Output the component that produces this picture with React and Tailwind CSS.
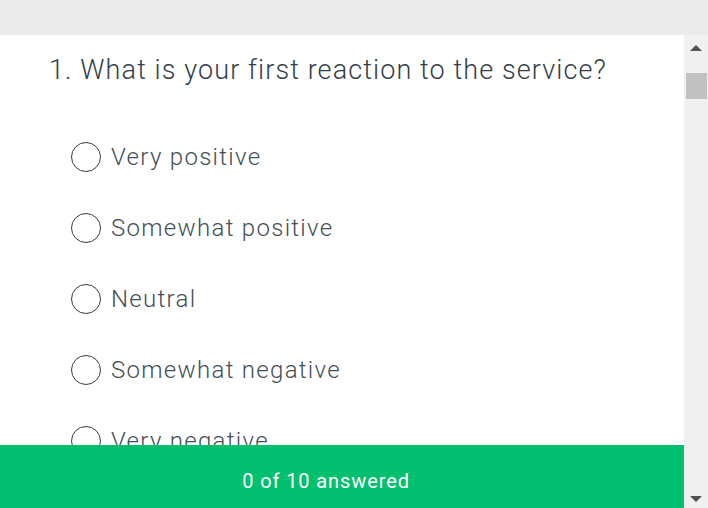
import React from 'react';

const options = ['Very positive', 'Somewhat positive', 'Neutral', 'Somewhat negative', 'Very negative'];

const App = () => {
    return (
        <div className="w-[708px] h-[508px] flex flex-col bg-[#ebebeb] overflow-hidden" style={{ fontFamily: 'Roboto, "Noto Sans", sans-serif' }}>
            {/* top gray band */}
            <div className="h-[35px] shrink-0" />

            <div className="flex flex-1 min-h-0">
                {/* survey panel */}
                <div className="flex flex-col flex-1 bg-white min-w-0">
                    <div className="flex-1 min-h-0 overflow-hidden pl-[49px] pt-[17px]">
                        <h1 className="text-[27px] leading-[36px] font-light text-[#333e48] tracking-[1.1px] whitespace-nowrap">
                            1. What is your first reaction to the service?
                        </h1>
                        <div className="flex flex-col mt-[33px] pl-[22px]">
                            {options.map((opt) => (
                                <div key={opt} className="flex items-center h-[71px] gap-[10px]">
                                    <span className="w-[30px] h-[30px] rounded-full border border-[#333e48] shrink-0" />
                                    <span className="text-[24px] font-light text-[#434e57] tracking-[1.3px]">{opt}</span>
                                </div>
                            ))}
                        </div>
                    </div>
                    <div className="h-[63px] shrink-0 bg-[#00bf6f] flex items-center justify-center pt-[8px] pr-[32px]">
                        <span className="text-white text-[20px] font-normal tracking-[0.9px]">0 of 10 answered</span>
                    </div>
                </div>

                {/* scrollbar */}
                <div className="w-[24px] shrink-0 bg-[#f0f0f0] flex flex-col items-center">
                    <div className="h-[26px] flex items-center justify-center">
                        <span className="w-0 h-0 border-l-[6px] border-r-[6px] border-b-[6px] border-l-transparent border-r-transparent border-b-[#505050]" />
                    </div>
                    <div className="mt-[12px] w-[21px] h-[26px] bg-[#c1c1c1]" />
                    <div className="flex-1" />
                    <div className="h-[12px] flex items-start justify-center">
                        <span className="w-0 h-0 border-l-[6px] border-r-[6px] border-t-[6px] border-l-transparent border-r-transparent border-t-[#505050]" />
                    </div>
                </div>
            </div>
        </div>
    );
};

export default App;
